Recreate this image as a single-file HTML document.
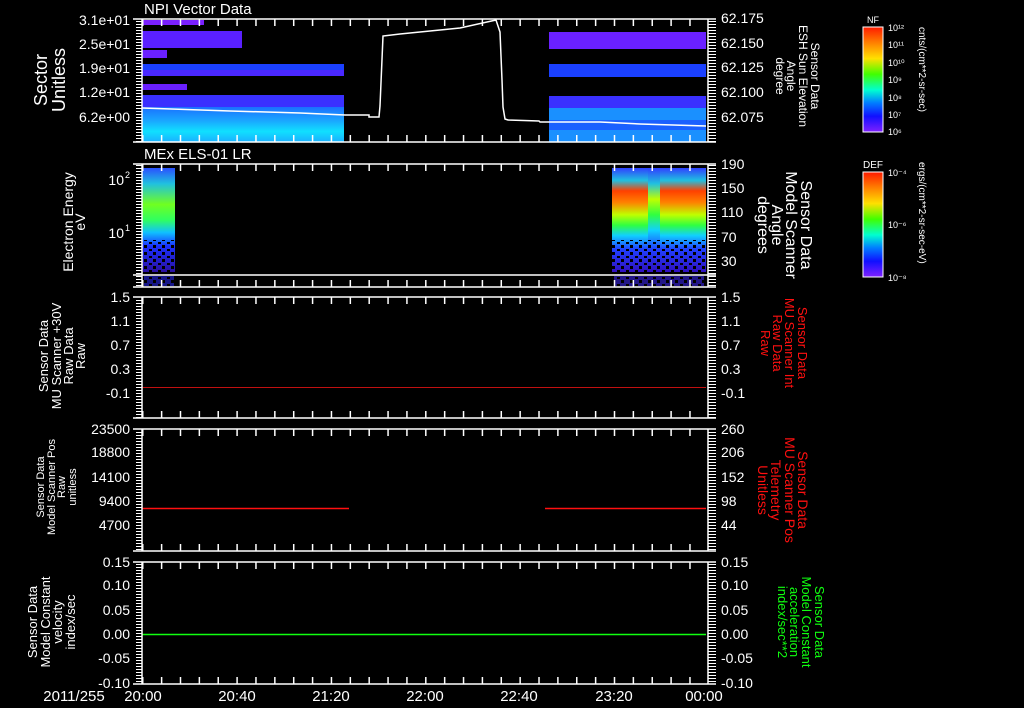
<!DOCTYPE html>
<html><head><meta charset="utf-8"><style>
html,body{margin:0;padding:0;background:#000;}
svg{display:block;}
text{font-family:"Liberation Sans",sans-serif;fill:#fff;}
.t{font-size:14px;}
</style></head><body>
<svg width="1024" height="708" viewBox="0 0 1024 708" xmlns="http://www.w3.org/2000/svg">
<defs>
<pattern id="yt" x="0" y="0" width="10" height="3" patternUnits="userSpaceOnUse"><rect x="0" y="0" width="10" height="1" fill="#fff"/></pattern>
<pattern id="xt" x="142" y="0" width="18.87" height="10" patternUnits="userSpaceOnUse"><rect x="0" y="0" width="1.5" height="10" fill="#fff"/></pattern>
<pattern id="spk" x="0" y="0" width="9" height="7" patternUnits="userSpaceOnUse"><rect x="0" y="0" width="3" height="3" fill="#000"/><rect x="5" y="4" width="3" height="2" fill="#000"/></pattern>
<linearGradient id="cb" x1="0" y1="0" x2="0" y2="1">
<stop offset="0" stop-color="#ff1a00"/><stop offset="0.15" stop-color="#ff8000"/><stop offset="0.3" stop-color="#ffe000"/><stop offset="0.45" stop-color="#40ff00"/><stop offset="0.6" stop-color="#00ffd0"/><stop offset="0.72" stop-color="#0080ff"/><stop offset="0.85" stop-color="#1010ff"/><stop offset="1" stop-color="#8020ff"/></linearGradient>
<linearGradient id="p1b" x1="0" y1="0" x2="0" y2="1"><stop offset="0" stop-color="#1a70ff"/><stop offset="0.4" stop-color="#1aa8ff"/><stop offset="0.7" stop-color="#10e0ff"/><stop offset="1" stop-color="#1ab0ff"/></linearGradient>
<linearGradient id="e1" x1="0" y1="0" x2="0" y2="1"><stop offset="0" stop-color="#2a50ff"/><stop offset="0.15" stop-color="#20c0e0"/><stop offset="0.35" stop-color="#70ff20"/><stop offset="0.5" stop-color="#30ff60"/><stop offset="0.62" stop-color="#10c0ff"/><stop offset="0.75" stop-color="#1a30ff"/><stop offset="1" stop-color="#2a10a0"/></linearGradient>
<linearGradient id="e2" x1="0" y1="0" x2="0" y2="1"><stop offset="0" stop-color="#3040ff"/><stop offset="0.12" stop-color="#20c0e0"/><stop offset="0.22" stop-color="#ff4000"/><stop offset="0.33" stop-color="#ff8000"/><stop offset="0.45" stop-color="#c0ff00"/><stop offset="0.55" stop-color="#30ff40"/><stop offset="0.65" stop-color="#10d0ff"/><stop offset="0.78" stop-color="#2040ff"/><stop offset="1" stop-color="#3010c0"/></linearGradient>
<linearGradient id="e3" x1="0" y1="0" x2="0" y2="1"><stop offset="0" stop-color="#3040ff"/><stop offset="0.15" stop-color="#20c0e0"/><stop offset="0.3" stop-color="#c0ff00"/><stop offset="0.45" stop-color="#30ff40"/><stop offset="0.6" stop-color="#10d0ff"/><stop offset="0.78" stop-color="#2040ff"/><stop offset="1" stop-color="#3010c0"/></linearGradient>
</defs>

<!-- Panel 1 spectrogram -->
<g>
<rect x="142" y="20" width="62" height="5" fill="#7a20ff"/>
<rect x="142" y="31" width="100" height="17" fill="#5a20ff"/>
<rect x="142" y="50" width="25" height="8" fill="#6a20ff"/>
<rect x="142" y="64" width="202" height="6" fill="#1a40ff"/>
<rect x="142" y="70" width="202" height="6" fill="#4a28ff"/>
<rect x="142" y="84" width="45" height="6" fill="#6a20ff"/>
<rect x="142" y="95" width="202" height="12" fill="#3a30ff"/>
<rect x="142" y="107" width="202" height="35" fill="url(#p1b)"/>
<rect x="549" y="32" width="157" height="17" fill="#6a20ff"/>
<rect x="549" y="64" width="157" height="13" fill="#1a40ff"/>
<rect x="549" y="96" width="157" height="12" fill="#3a30ff"/>
<rect x="549" y="108" width="157" height="34" fill="#1a90ff"/>
<rect x="549" y="120" width="157" height="10" fill="#1a60ff"/>
<polyline fill="none" stroke="#fff" stroke-width="1.5" points="142,108 230,111 300,113 345,115 369,115 369,117 379,117 380,106 383,36 400,34 430,31 460,28 496,20 500,32 502,80 503,107 505,119 508,120 539,121 540,122 600,122 640,124 706,126"/>
</g>

<!-- Panel 2 spectrogram -->
<rect x="142" y="168" width="33" height="104" fill="url(#e1)"/>
<rect x="142" y="240" width="33" height="32" fill="url(#spk)"/>
<rect x="144" y="276" width="30" height="10" fill="#2020c0" opacity="0.7"/>
<rect x="144" y="276" width="30" height="10" fill="url(#spk)"/>
<rect x="612" y="168" width="36" height="104" fill="url(#e2)"/>
<rect x="648" y="168" width="12" height="104" fill="url(#e3)"/>
<rect x="660" y="168" width="46" height="104" fill="url(#e2)"/>
<rect x="612" y="240" width="94" height="32" fill="url(#spk)"/>
<rect x="614" y="276" width="90" height="10" fill="#3020c0" opacity="0.7"/>
<rect x="614" y="276" width="90" height="10" fill="url(#spk)"/>
<line x1="133" y1="275" x2="716" y2="275" stroke="#fff" stroke-width="1.5"/>

<!-- Lines in panels 3-5 -->
<line x1="142" y1="387.5" x2="706" y2="387.5" stroke="#c01010" stroke-width="1"/>
<line x1="142" y1="508.5" x2="349" y2="508.5" stroke="#ff1010" stroke-width="1.5"/>
<line x1="545" y1="508.5" x2="706" y2="508.5" stroke="#ff1010" stroke-width="1.5"/>
<line x1="142" y1="634.5" x2="706" y2="634.5" stroke="#10ff10" stroke-width="1.5"/>

<!-- frames -->
<g stroke="#fff" stroke-width="1.5" fill="none">
<path d="M133 19H716M133 142H716M142 19V142M708 19V142"/>
<path d="M133 164H716M133 287H716M142 164V287M708 164V287"/>
<path d="M133 297H716M133 418H716M142 297V418M708 297V418"/>
<path d="M133 429H716M133 551H716M142 429V551M708 429V551"/>
<path d="M133 562H716M133 684H716M142 562V684M708 562V684"/>
</g>
<g fill="url(#yt)">
<rect x="136" y="20" width="6" height="122"/><rect x="708" y="20" width="8" height="122"/>
<rect x="136" y="165" width="6" height="122"/><rect x="708" y="165" width="8" height="122"/>
<rect x="136" y="298" width="6" height="120"/><rect x="708" y="298" width="8" height="120"/>
<rect x="136" y="430" width="6" height="121"/><rect x="708" y="430" width="8" height="121"/>
<rect x="136" y="563" width="6" height="121"/><rect x="708" y="563" width="8" height="121"/>
</g>
<g fill="url(#xt)">
<rect x="142" y="19" width="566" height="7"/><rect x="142" y="135" width="566" height="7"/>
<rect x="142" y="164" width="566" height="7"/><rect x="142" y="280" width="566" height="7"/>
<rect x="142" y="297" width="566" height="7"/><rect x="142" y="411" width="566" height="7"/>
<rect x="142" y="429" width="566" height="7"/><rect x="142" y="544" width="566" height="7"/>
<rect x="142" y="562" width="566" height="7"/><rect x="142" y="677" width="566" height="7"/>
</g>

<text x="144" y="14" font-size="15">NPI Vector Data</text>
<text x="144" y="159" font-size="15">MEx ELS-01 LR</text>

<g class="t" text-anchor="end">
<text x="130" y="25">3.1e+01</text><text x="130" y="49">2.5e+01</text><text x="130" y="73">1.9e+01</text><text x="130" y="97">1.2e+01</text><text x="130" y="122">6.2e+00</text>
<text x="124" y="185">10</text><text x="130" y="178" font-size="9">2</text>
<text x="124" y="238">10</text><text x="130" y="231" font-size="9">1</text>
<text x="130" y="302">1.5</text><text x="130" y="326">1.1</text><text x="130" y="350">0.7</text><text x="130" y="374">0.3</text><text x="130" y="398">-0.1</text>
<text x="130" y="434">23500</text><text x="130" y="457">18800</text><text x="130" y="482">14100</text><text x="130" y="506">9400</text><text x="130" y="530">4700</text>
<text x="130" y="567">0.15</text><text x="130" y="590">0.10</text><text x="130" y="615">0.05</text><text x="130" y="639">0.00</text><text x="130" y="663">-0.05</text><text x="130" y="688">-0.10</text>
</g>
<g class="t">
<text x="721" y="23">62.175</text><text x="721" y="48">62.150</text><text x="721" y="72">62.125</text><text x="721" y="97">62.100</text><text x="721" y="122">62.075</text>
<text x="721" y="169">190</text><text x="721" y="193">150</text><text x="721" y="217">110</text><text x="721" y="242">70</text><text x="721" y="266">30</text>
<text x="721" y="302">1.5</text><text x="721" y="326">1.1</text><text x="721" y="350">0.7</text><text x="721" y="374">0.3</text><text x="721" y="398">-0.1</text>
<text x="721" y="434">260</text><text x="721" y="457">206</text><text x="721" y="482">152</text><text x="721" y="506">98</text><text x="721" y="530">44</text>
<text x="721" y="567">0.15</text><text x="721" y="590">0.10</text><text x="721" y="615">0.05</text><text x="721" y="639">0.00</text><text x="721" y="663">-0.05</text><text x="721" y="688">-0.10</text>
</g>
<g font-size="15" text-anchor="middle">
<text x="74" y="701">2011/255</text>
<text x="143" y="701">20:00</text><text x="237" y="701">20:40</text><text x="331" y="701">21:20</text><text x="425" y="701">22:00</text><text x="519" y="701">22:40</text><text x="614" y="701">23:20</text><text x="704" y="701">00:00</text>
</g>

<g text-anchor="middle">
<g transform="translate(47,80) rotate(-90)" font-size="18"><text x="0" y="0">Sector</text><text x="0" y="18">Unitless</text></g>
<g transform="translate(73,222) rotate(-90)" font-size="14"><text x="0" y="0">Electron Energy</text><text x="0" y="12">eV</text></g>
<g transform="translate(48,356) rotate(-90)" font-size="13"><text x="0" y="0">Sensor Data</text><text x="0" y="13">MU Scanner +30V</text><text x="0" y="25">Raw Data</text><text x="0" y="37">Raw</text></g>
<g transform="translate(44,487) rotate(-90)" font-size="11"><text x="0" y="0">Sensor Data</text><text x="0" y="11">Model Scanner Pos</text><text x="0" y="21">Raw</text><text x="0" y="32">unitless</text></g>
<g transform="translate(37,622) rotate(-90)" font-size="13"><text x="0" y="0">Sensor Data</text><text x="0" y="13">Model Constant</text><text x="0" y="25">velocity</text><text x="0" y="38">index/sec</text></g>
</g>
<g text-anchor="middle">
<g transform="translate(811,76) rotate(90)" font-size="12"><text x="0" y="0">Sensor Data</text><text x="0" y="12">ESH Sun Elevation</text><text x="0" y="24">Angle</text><text x="0" y="35">degree</text></g>
<g transform="translate(801,225) rotate(90)" font-size="16"><text x="0" y="0">Sensor Data</text><text x="0" y="15">Model Scanner</text><text x="0" y="29">Angle</text><text x="0" y="43">degrees</text></g>
<g transform="translate(798,343) rotate(90)" font-size="13"><text x="0" y="0" style="fill:#ff1010">Sensor Data</text><text x="0" y="13" style="fill:#ff1010">MU Scanner Int</text><text x="0" y="25" style="fill:#ff1010">Raw Data</text><text x="0" y="37" style="fill:#ff1010">Raw</text></g>
<g transform="translate(798,490) rotate(90)" font-size="14"><text x="0" y="0" style="fill:#ff1010">Sensor Data</text><text x="0" y="13" style="fill:#ff1010">MU Scanner Pos</text><text x="0" y="27" style="fill:#ff1010">Telemetry</text><text x="0" y="40" style="fill:#ff1010">Unitless</text></g>
<g transform="translate(815,622) rotate(90)" font-size="13"><text x="0" y="0" style="fill:#10ff10">Sensor Data</text><text x="0" y="13" style="fill:#10ff10">Model Constant</text><text x="0" y="25" style="fill:#10ff10">acceleration</text><text x="0" y="37" style="fill:#10ff10">index/sec**2</text></g>
</g>

<rect x="863" y="27" width="20" height="105" fill="url(#cb)" stroke="#fff" stroke-width="1"/>
<rect x="863" y="172" width="20" height="105" fill="url(#cb)" stroke="#fff" stroke-width="1"/>
<text x="873" y="23" font-size="9" text-anchor="middle">NF</text>
<text x="873" y="168" font-size="10" text-anchor="middle">DEF</text>
<g font-size="9">
<text x="888" y="31">10¹²</text><text x="888" y="48">10¹¹</text><text x="888" y="66">10¹⁰</text><text x="888" y="83">10⁹</text><text x="888" y="101">10⁸</text><text x="888" y="118">10⁷</text><text x="888" y="135">10⁶</text>
<text x="888" y="176">10⁻⁴</text><text x="888" y="228">10⁻⁶</text><text x="888" y="281">10⁻⁸</text>
</g>
<g font-size="10">
<text transform="translate(919,27) rotate(90)">cnts/(cm**2-sr-sec)</text>
<text transform="translate(919,162) rotate(90)">ergs/(cm**2-sr-sec-eV)</text>
</g>
</svg>
</body></html>
